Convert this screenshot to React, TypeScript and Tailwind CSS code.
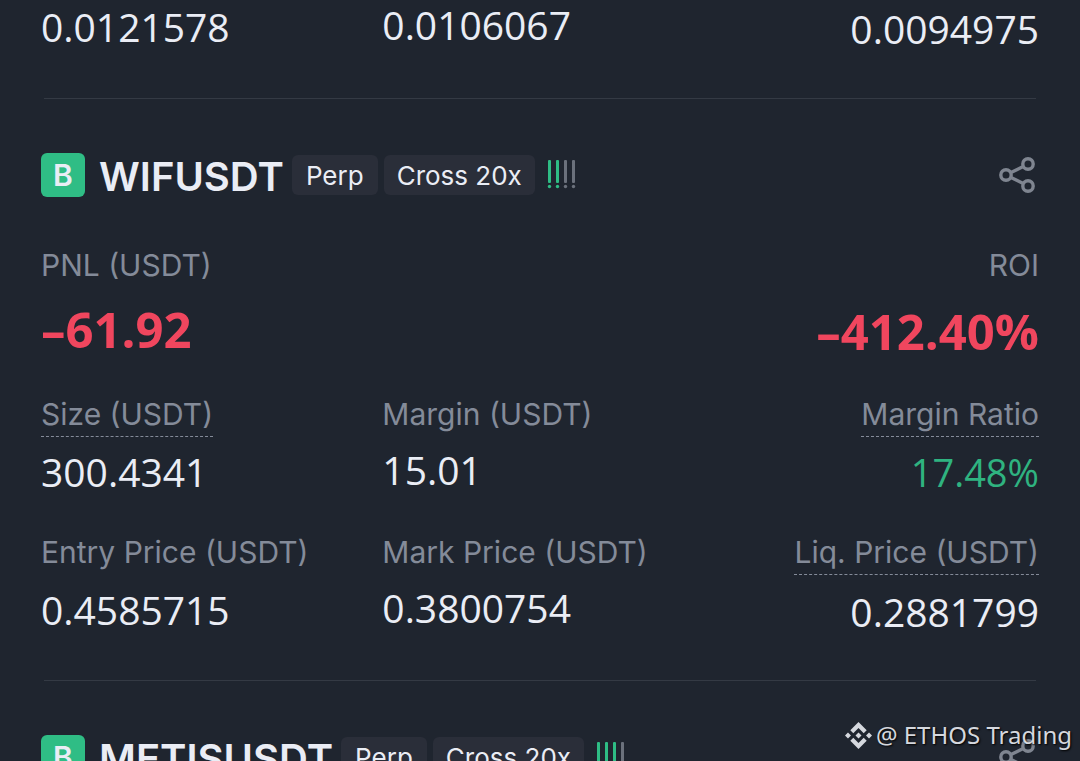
import React from "react";

type Cell = { label?: string; value: string; underlined?: boolean; green?: boolean };

function ShareIcon() {
  return (
    <svg width="38" height="38" viewBox="0 0 38 38" fill="none" stroke="#7f8590" strokeWidth="3.4">
      <circle cx="7" cy="19" r="5.2" />
      <circle cx="29" cy="8" r="5.2" />
      <circle cx="29" cy="30" r="5.2" />
      <path d="M12 16.5 24.2 10.5M12 21.5 24.2 27.5" />
    </svg>
  );
}

function RiskBars({ active }: { active: number }) {
  return (
    <svg width="30" height="30" viewBox="0 0 30 30" aria-hidden="true">
      {[0, 1, 2, 3].map((i) => (
        <g key={i} fill={i < active ? "#2ebd85" : "#6b717c"}>
          <rect x={1 + i * 8} y="0" width="3" height="23" rx="1" />
          <circle cx={2.5 + i * 8} cy="26.5" r="1.7" />
        </g>
      ))}
    </svg>
  );
}

function Header({ symbol, active }: { symbol: string; active: number }) {
  return (
    <header className="flex h-11 items-center font-['Inter',sans-serif]">
      <span className="flex size-11 shrink-0 items-center justify-center rounded-md bg-[#2fbd85] text-[30px] leading-none font-semibold">
        B
      </span>
      <h2 className="ml-3.5 pt-1 text-[40px] leading-none font-semibold">{symbol}</h2>
      <span className="ml-2 flex h-10 items-center rounded-md bg-[#2a2e39] px-3.5 text-[26px]">Perp</span>
      <span className="ml-1.5 flex h-10 items-center rounded-md bg-[#2a2e39] px-[13px] text-[26px]">Cross 20x</span>
      <span className="ml-3">
        <RiskBars active={active} />
      </span>
      <button type="button" aria-label="Share" className="mr-0.5 ml-auto">
        <ShareIcon />
      </button>
    </header>
  );
}

function Stats({ cells }: { cells: Cell[] }) {
  return (
    <dl className="grid grid-cols-[341fr_328fr_328fr] [&>div:first-child>dd]:pt-0.5 [&>div:last-child]:text-right">
      {cells.map((c, i) => (
        <div key={c.value}>
          {c.label && (
            <dt className="h-[50px] font-['Inter',sans-serif] text-[30px] leading-9 text-[#848b99]">
              <span className={c.underlined ? "inline-block border-b border-dashed border-[#848b99] pb-1" : "inline-block"}>
                {c.label}
              </span>
            </dt>
          )}
          <dd
            className={
              c.green
                ? "pt-0.5 text-[38px] leading-[48px] text-[#2fb380]"
                : i === 2
                  ? "pt-1 text-[39px] leading-[48px]"
                  : "text-[39px] leading-[48px]"
            }
          >
            {c.value}
          </dd>
        </div>
      ))}
    </dl>
  );
}

function Divider() {
  return <hr className="mx-[3px] border-[#343a44]" />;
}

export default function App() {
  return (
    <main className="relative h-screen overflow-hidden bg-[#1f252f] px-[41px] font-['Open_Sans','Noto_Sans',sans-serif] text-[#eaedf5]">
      <section className="pt-px pb-[45px]">
        <Stats cells={[{ value: "0.0121578" }, { value: "0.0106067" }, { value: "0.0094975" }]} />
      </section>
      <Divider />

      <section className="pt-[54px] pb-11">
        <Header symbol="WIFUSDT" active={2} />
        <dl className="mt-[50px] flex justify-between">
          <div>
            <dt className="font-['Inter',sans-serif] text-[30px] leading-9 text-[#848b99]">PNL (USDT)</dt>
            <dd className="mt-4 text-[49px] leading-[60px] font-bold text-[#f0465e]">–61.92</dd>
          </div>
          <div className="text-right">
            <dt className="font-['Inter',sans-serif] text-[30px] leading-9 text-[#848b99]">ROI</dt>
            <dd className="mt-[18px] text-[49px] leading-[60px] font-bold text-[#f0465e]">–412.40%</dd>
          </div>
        </dl>
        <div className="mt-[35px]">
          <Stats
            cells={[
              { label: "Size (USDT)", value: "300.4341", underlined: true },
              { label: "Margin (USDT)", value: "15.01" },
              { label: "Margin Ratio", value: "17.48%", underlined: true, green: true },
            ]}
          />
        </div>
        <div className="mt-[38px]">
          <Stats
            cells={[
              { label: "Entry Price (USDT)", value: "0.4585715" },
              { label: "Mark Price (USDT)", value: "0.3800754" },
              { label: "Liq. Price (USDT)", value: "0.2881799", underlined: true },
            ]}
          />
        </div>
      </section>
      <Divider />

      <section className="pt-[54px]">
        <Header symbol="METISUSDT" active={3} />
      </section>

      <div className="absolute right-2 bottom-2.5 flex items-center gap-1 font-['Noto_Sans',sans-serif] text-[24px] leading-8 text-[#d5d8de] [text-shadow:1px_1px_2px_#000]">
        <svg width="27" height="27" viewBox="0 0 28 28" fill="currentColor" aria-hidden="true">
          <path d="M14 0 22.5 8.5 19.4 11.6 14 6.2 8.6 11.6 5.5 8.5Z" />
          <path d="M14 28 5.5 19.5 8.6 16.4 14 21.8 19.4 16.4 22.5 19.5Z" />
          <path d="M14 10.9 17.1 14 14 17.1 10.9 14Z" />
          <path d="M3.1 10.9 6.2 14 3.1 17.1 0 14ZM24.9 10.9 28 14 24.9 17.1 21.8 14Z" />
        </svg>
        <span>@ ETHOS Trading</span>
      </div>
    </main>
  );
}
